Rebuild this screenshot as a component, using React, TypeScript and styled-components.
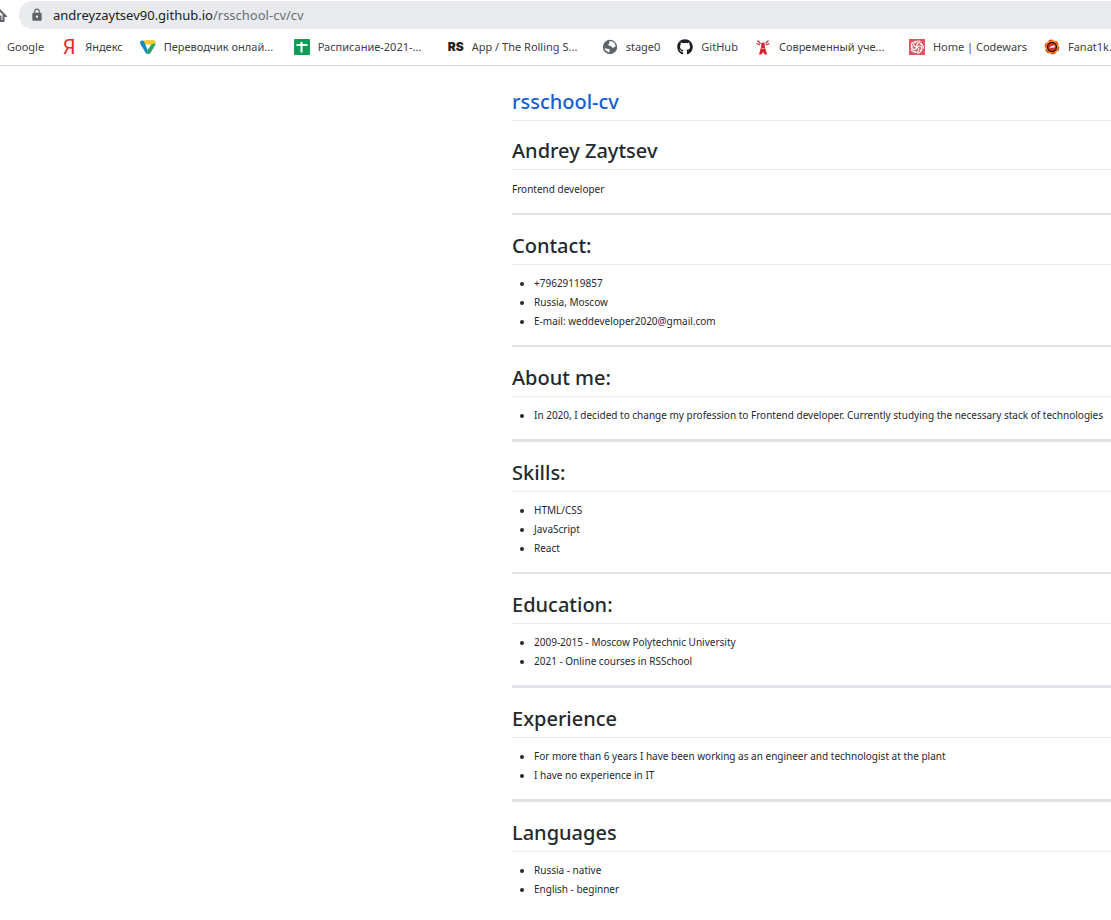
import React from 'react';
import styled, { createGlobalStyle } from 'styled-components';
import { FaGithub } from 'react-icons/fa';
import { MdLock } from 'react-icons/md';

const GlobalStyle = createGlobalStyle`
  * { box-sizing: border-box; }
  body {
    margin: 0;
    background: #fff;
    color: #24292e;
    font-family: "Noto Sans", "Open Sans", sans-serif;
    overflow-x: hidden;
  }
`;

const Browser = styled.header`
  border-bottom: 1px solid #d5d7da;
  overflow: hidden;
`;

const Toolbar = styled.div`
  display: flex;
  align-items: center;
  gap: 12px;
  padding-top: 1px;
`;

const HomeButton = styled.button`
  display: flex;
  justify-content: flex-end;
  width: 7px;
  height: 28px;
  padding: 0;
  border: 0;
  background: none;
  align-items: center;
  overflow: hidden;
  svg { flex: none; }
`;

const AddressBar = styled.div`
  flex: 1;
  display: flex;
  align-items: center;
  gap: 9px;
  height: 28px;
  padding-left: 11px;
  border-radius: 14px 0 0 14px;
  background: #e8eaed;
  color: #5f6368;
`;

const Address = styled.a`
  color: #6b6f74;
  font-size: 13px;
  line-height: 18px;
  text-decoration: none;
`;

const Host = styled.span`
  color: #202124;
`;

const Bookmarks = styled.nav`
  display: flex;
  align-items: center;
  gap: 17px;
  height: 36px;
  padding-left: 7px;
`;

const Bookmark = styled.a`
  flex: none;
  display: flex;
  align-items: center;
  gap: 8px;
  color: #3c4043;
  text-decoration: none;
  font-size: 11px;
  line-height: 16px;
  white-space: nowrap;
  svg { flex: none; }
`;

const Label = styled.span<{ $clipped?: boolean }>`
  width: ${(p) => (p.$clipped ? '113px' : 'auto')};
`;

const LetterLogo = styled.span<{ $heavy?: boolean }>`
  width: 16px;
  text-align: center;
  font-family: ${(p) => (p.$heavy ? 'Inter' : 'Roboto')}, sans-serif;
  font-size: ${(p) => (p.$heavy ? 12 : 20)}px;
  font-weight: ${(p) => (p.$heavy ? 900 : 400)};
  line-height: 16px;
  color: ${(p) => (p.$heavy ? '#222' : '#e8292b')};
`;

const Resume = styled.main`
  padding: 21px 0 24px 512px;
`;

const SectionTitle = styled.h2`
  margin: 0 0 9px;
  padding-bottom: 3px;
  border-bottom: 1px solid #eaecef;
  font-size: 20px;
  font-weight: 500;
  line-height: 30px;
`;

const PageTitle = styled(SectionTitle)`
  margin-bottom: 15px;
  a {
    color: #1560d0;
    text-decoration: none;
  }
`;

const Text = styled.p`
  margin: 0;
  font-size: 10px;
  line-height: 20px;
`;

const List = styled.ul`
  margin: 0;
  padding-left: 22px;
  font-size: 10px;
  line-height: 19px;
`;

const Rule = styled.hr<{ $thick?: boolean }>`
  height: ${(p) => (p.$thick ? 3 : 2)}px;
  margin: 14px 0 16px;
  border: 0;
  background: #e1e3e8;
`;

const HomeIcon = () => (
  <svg width="16" height="16" viewBox="0 0 16 16" fill="none" stroke="#5f6368" strokeWidth="2">
    <path d="M1 9 8 2.500 14.500 9H12.500V14H9.500V9.500H6.500V14H3.500V9H1" />
  </svg>
);

const TranslateIcon = () => (
  <svg width="16" height="16" viewBox="0 0 16 16">
    <path d="M0 3.500Q0 1.500 2 1.500L4.500 2 8.500 15H8Q6.500 15 5.500 13.500L.6 5.500Z" fill="#1687c9" />
    <path d="M3.500 1.500 12.500 1Q15.500 1 15.500 4L12 6.500 5.500 5.500Z" fill="#f7c925" />
    <path d="M15.600 4Q15.800 5 15 6.500L10.500 14Q9.500 15.300 8 15L7 11.500 11.500 5.500Z" fill="#2aa866" />
    <path d="M5.500 5.500H10.500L8 9.500Z" fill="#fff" />
  </svg>
);

const SheetIcon = () => (
  <svg width="16" height="16" viewBox="0 0 16 16">
    <rect width="16" height="16" rx="1" fill="#0f9d58" />
    <path d="M7.500 3V13.500M2.500 6H13.500" stroke="#fff" strokeWidth="2" />
  </svg>
);

const GlobeIcon = () => (
  <svg width="16" height="16" viewBox="0 0 16 16">
    <circle cx="8" cy="8" r="7.200" fill="#5f6368" />
    <path
      d="M7 2.500Q8 4 6.500 5.200 5.500 6.500 7.500 6.800 10 7 10 8.500 12 9 13.500 7.500 13.400 4 10.500 2.600 8.500 2 7 2.500ZM2.500 7.500Q2.500 9 3.500 9.500L7 10Q8.500 10.500 7.500 12L7.500 13.500Q4 13 2.800 10.200Z"
      fill="#fff"
    />
  </svg>
);

const TowerIcon = () => (
  <svg width="16" height="16" viewBox="0 0 16 16" fill="none" stroke="#d5232f">
    <path d="M6.500 6.500H9.500L12 15.500H9.500L8 13 6.500 15.500H4Z" fill="#d5232f" stroke="none" />
    <circle cx="8" cy="5.500" r="1.900" fill="#d5232f" stroke="none" />
    <path d="M6.500 9.500H9.500" stroke="#fff" strokeWidth=".6" />
    <path d="M5.500 4.500 2.500 1.500M5 6 1.500 4.500M10.500 4.500 13.500 1.500M11 6 14.500 4.500" strokeWidth="1.200" />
  </svg>
);

const CodewarsIcon = () => (
  <svg width="16" height="16" viewBox="0 0 16 16" fill="none" stroke="#fff" strokeLinecap="round">
    <rect width="16" height="16" fill="#d65a5e" stroke="none" />
    {[0, 72, 144, 216, 288].map((angle) => (
      <path
        key={angle}
        d="M8 8Q7 5.500 9 4 11.500 3 13.200 5.500M6.500 3.500Q8.500 1.200 11 2.300"
        strokeWidth="1.100"
        transform={`rotate(${angle} 8 8)`}
      />
    ))}
  </svg>
);

const FanatIcon = () => (
  <svg width="16" height="16" viewBox="0 0 16 16">
    <circle cx="8" cy="8" r="7" fill="#ef9722" />
    <circle cx="8" cy="8" r="6.700" fill="none" stroke="#e14a25" strokeWidth="1.400" strokeDasharray="4 3" />
    <circle cx="8" cy="8" r="5.200" fill="#26160f" />
    <circle cx="8" cy="8" r="3.900" fill="#d62d20" />
    <path d="M5 9.500Q7 6 11 6.500L10.500 8.500Q7.500 8 5 9.500Z" fill="#fff" />
  </svg>
);

const bookmarks = [
  { label: 'Google' },
  { label: 'Яндекс', icon: <LetterLogo aria-hidden>Я</LetterLogo> },
  { label: 'Переводчик онлай...', icon: <TranslateIcon />, clipped: true },
  { label: 'Расписание-2021-...', icon: <SheetIcon />, clipped: true },
  { label: 'App / The Rolling S...', icon: <LetterLogo $heavy aria-hidden>RS</LetterLogo>, clipped: true },
  { label: 'stage0', icon: <GlobeIcon /> },
  { label: 'GitHub', icon: <FaGithub size={16} color="#1b1f23" /> },
  { label: 'Современный уче...', icon: <TowerIcon />, clipped: true },
  { label: 'Home | Codewars', icon: <CodewarsIcon /> },
  { label: 'Fanat1k.', icon: <FanatIcon /> },
];

const sections = [
  { title: 'Contact:', items: ['+79629119857', 'Russia, Moscow', 'E-mail: weddeveloper2020@gmail.com'] },
  {
    title: 'About me:',
    items: [
      'In 2020, I decided to change my profession to Frontend developer. Currently studying the necessary stack of technologies',
    ],
    thick: true,
  },
  { title: 'Skills:', items: ['HTML/CSS', 'JavaScript', 'React'] },
  {
    title: 'Education:',
    items: ['2009-2015 - Moscow Polytechnic University', '2021 - Online courses in RSSchool'],
    thick: true,
  },
  {
    title: 'Experience',
    items: [
      'For more than 6 years I have been working as an engineer and technologist at the plant',
      'I have no experience in IT',
    ],
    thick: true,
  },
  { title: 'Languages', items: ['Russia - native', 'English - beginner'] },
];

export default function App() {
  return (
    <>
      <GlobalStyle />
      <Browser>
        <Toolbar>
          <HomeButton aria-label="Home"><HomeIcon /></HomeButton>
          <AddressBar>
            <MdLock size={14} />
            <Address href="#cv"><Host>andreyzaytsev90.github.io</Host>/rsschool-cv/cv</Address>
          </AddressBar>
        </Toolbar>
        <Bookmarks aria-label="Bookmarks">
          {bookmarks.map(({ label, icon, clipped }) => (
            <Bookmark key={label} href="#bookmark">
              {icon}
              <Label $clipped={clipped}>{label}</Label>
            </Bookmark>
          ))}
        </Bookmarks>
      </Browser>
      <Resume>
        <PageTitle as="h1"><a href="#home">rsschool-cv</a></PageTitle>
        <SectionTitle>Andrey Zaytsev</SectionTitle>
        <Text>Frontend developer</Text>
        <Rule />
        {sections.map(({ title, items, thick }, index) => (
          <section key={title}>
            <SectionTitle>{title}</SectionTitle>
            <List>{items.map((item) => <li key={item}>{item}</li>)}</List>
            {index < sections.length - 1 && <Rule $thick={thick} />}
          </section>
        ))}
      </Resume>
    </>
  );
}
